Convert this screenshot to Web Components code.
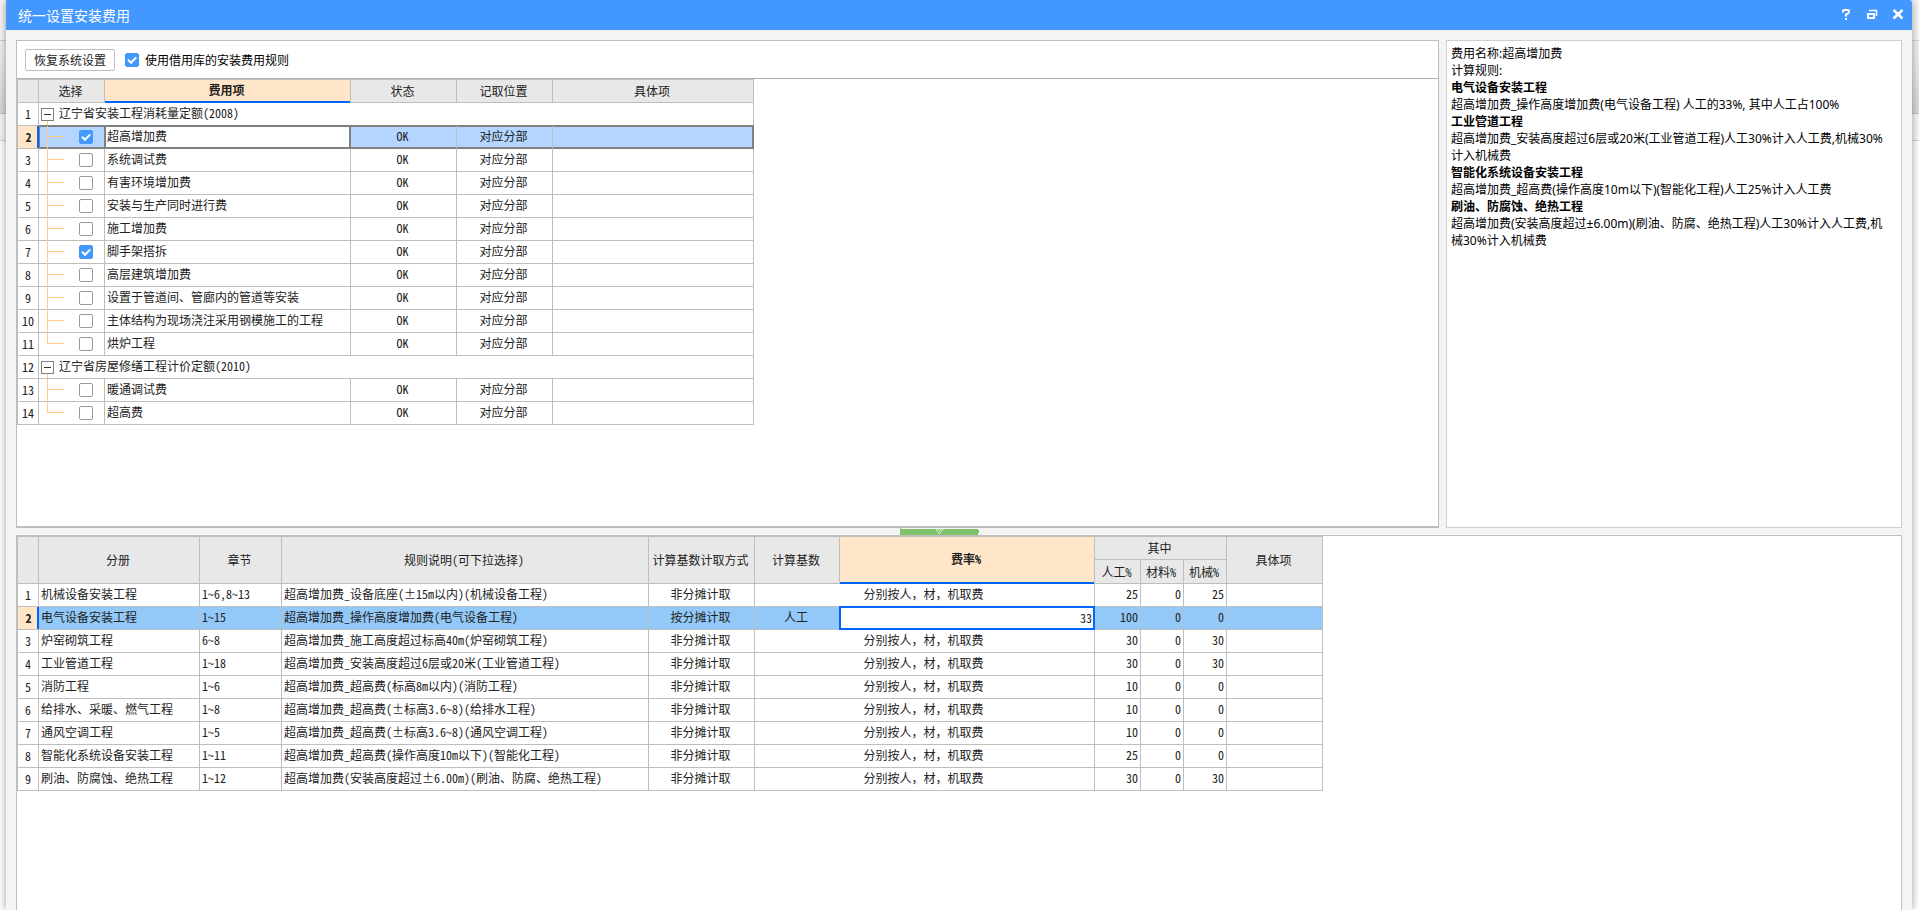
<!DOCTYPE html>
<html lang="zh-CN">
<head>
<meta charset="utf-8">
<title>统一设置安装费用</title>
<style>
  html { height: 100%; }
  body { margin: 0; min-height: 100%; display: flex; overflow: hidden;
    background: linear-gradient(#f6f6f6 40px, #d0d0d0 40px 41px, #f4f4f4 41px, #d8d8d8 113px, #c4c4c4 113px 114px, #f6f6f6 114px 140px, #d4d4d4 140px 141px, #fff 141px);
    font-family: "Noto Sans CJK SC", sans-serif; font-size: 12px; color: #000; }
</style>
</head>
<body>
<fee-dialog></fee-dialog>
<script>
const CHECK_CSS = `
  input[type=checkbox] { appearance: none; display: block; flex: none; box-sizing: border-box; width: 14px; height: 14px; margin: 0;
    border: 1px solid #999; border-radius: 2px; background: #fff; }
  input[type=checkbox]:checked { border-color: #4398ff; background: #4398ff
    url('data:image/svg+xml,<svg xmlns="http://www.w3.org/2000/svg" viewBox="0 0 14 14"><path d="M3 6.8 6 9.8 11.2 4.4" fill="none" stroke="white" stroke-width="2"/></svg>') center / 14px 14px no-repeat; }`;

const GRID_CSS = `
  :host { display: block; font-family: "Noto Sans Mono CJK SC", "Noto Sans CJK SC", sans-serif; color: #222; }
  table { table-layout: fixed; width: 0; border-collapse: separate; border-spacing: 0; border-top: 1px solid #bebebe; border-left: 1px solid #bebebe; }
  th, td { box-sizing: border-box; height: 23px; padding: 0 2px 2px 2px; border-right: 1px solid #bebebe; border-bottom: 1px solid #bebebe;
    line-height: 18px; font-weight: 400; text-align: left; white-space: nowrap; overflow: hidden; }
  thead th { background: #e8e8e8; text-align: center; padding: 0 2px 0 0; }
  thead th.active { background: #ffe6c8; font-weight: 700; border-bottom: 0; padding-bottom: 3px; box-shadow: inset 0 -2px #0066ff; }
  tbody th { text-align: center; padding: 0; }
  tr.current th { background: #ffe6c8; font-weight: 700; border-right: 0; box-shadow: inset -2px 0 #0066ff; }
  td.c { text-align: center; padding-left: 0; }
  .r { text-align: right; }`;

class FeeDialog extends HTMLElement {
  constructor() {
    super();
    this.attachShadow({ mode: 'open' }).innerHTML = `
    <style>
      :host { flex: 1; min-width: 0; display: flex; flex-direction: column; margin: 0 7px 0 6px; border-radius: 0 3px 0 0; background: #f4f4f4; box-shadow: 0 0 8px rgba(0,0,0,.4); }
      main { flex: 1; display: flex; flex-direction: column; padding: 10px 10px 0 10px; }
      .top { display: flex; gap: 7px; min-height: 488px; }
      fee-panel { flex: 1; min-width: 0; }
      rule-note { flex: 0 0 456px; box-sizing: border-box; }
      .bottom { flex: 1; border: 1px solid #bebebe; border-bottom: 0; background: #fff; }
    </style>
    <title-bar>统一设置安装费用</title-bar>
    <main>
      <div class="top">
        <fee-panel><fee-grid></fee-grid></fee-panel>
        <rule-note></rule-note>
      </div>
      <split-bar></split-bar>
      <div class="bottom"><rate-grid></rate-grid></div>
    </main>`;
  }
}

class TitleBar extends HTMLElement {
  constructor() {
    super();
    this.attachShadow({ mode: 'open' }).innerHTML = `
    <style>
      :host { display: flex; align-items: center; height: 30px; padding: 0 6px 0 12px; border-radius: 0 3px 0 0; background: #4398ff; color: #fff; }
      h1 { flex: 1; margin: 0; font-size: 14px; font-weight: 400; line-height: 30px; }
      .tools { display: flex; gap: 10px; padding-bottom: 2px; }
      button { width: 16px; height: 16px; padding: 0; border: 0; background: none; }
      svg { display: block; }
    </style>
    <h1><slot></slot></h1>
    <div class="tools">
      <button aria-label="帮助"><svg width="16" height="16" viewBox="0 0 16 16" fill="none" stroke="#fff" stroke-width="2"><path d="M5 6.500V4.500Q5 4 6 4H10Q11 4 11 5V6Q11 7 8 8.500V10.500M8 12V14"/></svg></button>
      <button aria-label="还原"><svg width="16" height="16" viewBox="0 0 16 16" fill="none" stroke="#fff"><path d="M5 4.500H12.500V10" stroke-width="1.500"/><path d="M4 8H10V12H4Z" stroke-width="2"/></svg></button>
      <button aria-label="关闭"><svg width="16" height="16" viewBox="0 0 16 16" fill="none" stroke="#fff" stroke-width="2.500"><path d="M3.500 4 12.500 12.500M12.500 4 3.500 12.500"/></svg></button>
    </div>`;
  }
}

class FeePanel extends HTMLElement {
  constructor() {
    super();
    this.attachShadow({ mode: 'open' }).innerHTML = `
    <style>${CHECK_CSS}
      :host { display: block; box-sizing: border-box; border: 1px solid #bebebe; border-bottom-width: 2px; background: #fff; }
      .bar { display: flex; align-items: center; gap: 10px; height: 37px; padding-left: 8px; border-bottom: 1px solid #b0b0b0; }
      button { box-sizing: border-box; width: 90px; height: 22px; padding: 0; border: 1px solid #bebebe; border-radius: 2px; background: #fff; font: inherit; line-height: 20px; color: #222; }
      label { display: flex; align-items: center; gap: 6px; line-height: 18px; }
    </style>
    <div class="bar">
      <button>恢复系统设置</button>
      <label><input type="checkbox" checked>使用借用库的安装费用规则</label>
    </div>
    <slot></slot>`;
  }
}

const FEES = [
  { group: '辽宁省安装工程消耗量定额(2008)' },
  { name: '超高增加费', on: true, current: true },
  { name: '系统调试费' }, { name: '有害环境增加费' }, { name: '安装与生产同时进行费' }, { name: '施工增加费' },
  { name: '脚手架搭拆', on: true }, { name: '高层建筑增加费' }, { name: '设置于管道间、管廊内的管道等安装' },
  { name: '主体结构为现场浇注采用钢模施工的工程' }, { name: '烘炉工程', last: true },
  { group: '辽宁省房屋修缮工程计价定额(2010)' },
  { name: '暖通调试费' }, { name: '超高费', last: true },
];

class FeeGrid extends HTMLElement {
  constructor() {
    super();
    const rows = FEES.map((f, i) => f.group
      ? `<tr><th scope="row">${i + 1}</th><td colspan="5" class="group"><span><button aria-label="折叠"></button><b>${f.group}</b></span></td></tr>`
      : `<tr class="${f.current ? 'current' : ''}"><th scope="row">${i + 1}</th><td class="pick"><div class="${f.last ? 'last' : ''}"><i></i><input type="checkbox" aria-label="${f.name}" ${f.on ? 'checked' : ''}></div></td><td class="name">${f.name}</td><td class="c">OK</td><td class="c">对应分部</td><td></td></tr>`).join('');
    this.attachShadow({ mode: 'open' }).innerHTML = `
    <style>${CHECK_CSS}${GRID_CSS}
      td.group { padding: 0; }
      .group span { display: flex; align-items: center; gap: 5px; height: 22px; padding-left: 2px;
        background: linear-gradient(#fc8, #fc8) 8px 100% / 1px 5px no-repeat; }
      .group b { font-weight: 400; padding-bottom: 2px; }
      .group button { box-sizing: border-box; width: 13px; height: 13px; padding: 0; border: 1px solid #808080;
        background: linear-gradient(#333, #333) center / 7px 1px no-repeat #fff; }
      td.pick { padding: 0; overflow: visible; }
      .pick div { display: flex; align-items: center; justify-content: space-between; box-sizing: border-box; height: 23px; margin-bottom: -1px; padding: 0 11px 1px 8px;
        background: linear-gradient(#fc8, #fc8) 8px 0 / 1px 100% no-repeat; }
      .pick .last { background-size: 1px 11px; }
      .pick i { width: 17px; height: 1px; margin-bottom: 2px; background: #fc8; }
      tr.current td { background-color: #b3d5ff; border-bottom-color: #808080; box-shadow: 0 -1px #808080, inset 0 1px #808080, inset 0 -1px #808080; }
      tr.current .pick { box-shadow: 0 -1px #808080, inset 1px 1px #808080, inset 0 -1px #808080; border-right-color: #808080; }
      tr.current .name { background: #fff; border-right-color: #808080; box-shadow: 0 -1px #808080, inset 1px 1px #808080, inset -1px -1px #808080; }
      tr.current td:last-child { border-right-color: #808080; box-shadow: 0 -1px #808080, inset 0 1px #808080, inset -1px -1px #808080; }
    </style>
    <table>
      <colgroup><col style="width:21px"><col style="width:66px"><col style="width:246px"><col style="width:106px"><col style="width:96px"><col style="width:201px"></colgroup>
      <thead><tr><th></th><th>选择</th><th class="active">费用项</th><th>状态</th><th>记取位置</th><th>具体项</th></tr></thead>
      <tbody>${rows}</tbody>
    </table>`;
  }
}

class RuleNote extends HTMLElement {
  constructor() {
    super();
    this.attachShadow({ mode: 'open' }).innerHTML = `
    <style>
      :host { display: block; padding: 4px 12px 4px 4px; border: 1px solid #cfcfcf; background: #fff;
        font-family: "Noto Sans", "Noto Sans CJK SC", sans-serif; }
      p, h2 { margin: 0; font-size: 12px; line-height: 17px; word-break: break-all; }
    </style>
    <p>费用名称:超高增加费</p>
    <p>计算规则:</p>
    <h2>电气设备安装工程</h2>
    <p>超高增加费_操作高度增加费(电气设备工程) 人工的33%, 其中人工占100%</p>
    <h2>工业管道工程</h2>
    <p>超高增加费_安装高度超过6层或20米(工业管道工程)人工30%计入人工费,机械30%计入机械费</p>
    <h2>智能化系统设备安装工程</h2>
    <p>超高增加费_超高费(操作高度10m以下)(智能化工程)人工25%计入人工费</p>
    <h2>刷油、防腐蚀、绝热工程</h2>
    <p>超高增加费(安装高度超过±6.00m)(刷油、防腐、绝热工程)人工30%计入人工费,机械30%计入机械费</p>`;
  }
}

class SplitBar extends HTMLElement {
  constructor() {
    super();
    this.attachShadow({ mode: 'open' }).innerHTML = `
    <style>
      :host { display: flex; justify-content: center; height: 7px; padding-right: 40px; }
      button { width: 79px; height: 7px; padding: 0; border: 0; background: none; }
      svg { display: block; }
    </style>
    <button aria-label="收起"><svg width="79" height="7" viewBox="0 0 79 7"><path d="M0 0H1V1H78V2H79V5H78V7H0Z" fill="#7fc26b"/><path d="M36 1 39.500 6 43 1M38 1 39.500 3 41 1" fill="none" stroke="#d5f0cc"/></svg></button>`;
  }
}

const RATES = [
  ['机械设备安装工程', '1~6,8~13', '超高增加费_设备底座(±15m以内)(机械设备工程)', 25, 0, 25],
  ['电气设备安装工程', '1~15', '超高增加费_操作高度增加费(电气设备工程)', 100, 0, 0],
  ['炉窑砌筑工程', '6~8', '超高增加费_施工高度超过标高40m(炉窑砌筑工程)', 30, 0, 30],
  ['工业管道工程', '1~18', '超高增加费_安装高度超过6层或20米(工业管道工程)', 30, 0, 30],
  ['消防工程', '1~6', '超高增加费_超高费(标高8m以内)(消防工程)', 10, 0, 0],
  ['给排水、采暖、燃气工程', '1~8', '超高增加费_超高费(±标高3.6~8)(给排水工程)', 10, 0, 0],
  ['通风空调工程', '1~5', '超高增加费_超高费(±标高3.6~8)(通风空调工程)', 10, 0, 0],
  ['智能化系统设备安装工程', '1~11', '超高增加费_超高费(操作高度10m以下)(智能化工程)', 25, 0, 0],
  ['刷油、防腐蚀、绝热工程', '1~12', '超高增加费(安装高度超过±6.00m)(刷油、防腐、绝热工程)', 30, 0, 30],
];

class RateGrid extends HTMLElement {
  constructor() {
    super();
    const rows = RATES.map(([book, chapter, rule, ...parts], i) => {
      const cur = i === 1;
      const rate = cur ? '<td class="c">人工</td><td class="edit"><input type="text" aria-label="费率%" value="33"></td>'
        : '<td colspan="2" class="c">分别按人，材，机取费</td>';
      return `<tr class="${cur ? 'current' : ''}"><th scope="row">${i + 1}</th><td>${book}</td><td>${chapter}</td><td>${rule}</td><td class="c">${cur ? '按分摊计取' : '非分摊计取'}</td>${rate}${parts.map(p => `<td class="r">${p}</td>`).join('')}<td></td></tr>`;
    }).join('');
    const widths = [21, 161, 82, 367, 106, 85, 255, 46, 43, 43, 96];
    this.attachShadow({ mode: 'open' }).innerHTML = `
    <style>${GRID_CSS}
      tr.current td { background: #93c9f8; }
      tr.current .edit { padding: 0; border: 0; background: #fff; overflow: visible; box-shadow: -1px -1px #0066ff, -1px 0 #0066ff, 0 -1px #0066ff; }
      .edit input { display: block; box-sizing: border-box; width: 100%; height: 23px; margin: 0; padding: 0 1px 1px 2px; border: 2px solid #0066ff; border-left-width: 1px; border-top-width: 1px;
        outline: 0; background: #fff; font: inherit; color: inherit; text-align: right; }
    </style>
    <table>
      <colgroup>${widths.map(w => `<col style="width:${w}px">`).join('')}</colgroup>
      <thead>
        <tr><th rowspan="2"></th><th rowspan="2">分册</th><th rowspan="2">章节</th><th rowspan="2">规则说明(可下拉选择)</th><th rowspan="2">计算基数计取方式</th><th rowspan="2">计算基数</th><th rowspan="2" class="active">费率%</th><th colspan="3">其中</th><th rowspan="2">具体项</th></tr>
        <tr><th style="height:24px">人工%</th><th>材料%</th><th>机械%</th></tr>
      </thead>
      <tbody>${rows}</tbody>
    </table>`;
  }
}

customElements.define('title-bar', TitleBar);
customElements.define('fee-panel', FeePanel);
customElements.define('fee-grid', FeeGrid);
customElements.define('rule-note', RuleNote);
customElements.define('split-bar', SplitBar);
customElements.define('rate-grid', RateGrid);
customElements.define('fee-dialog', FeeDialog);
</script>
</body>
</html>
